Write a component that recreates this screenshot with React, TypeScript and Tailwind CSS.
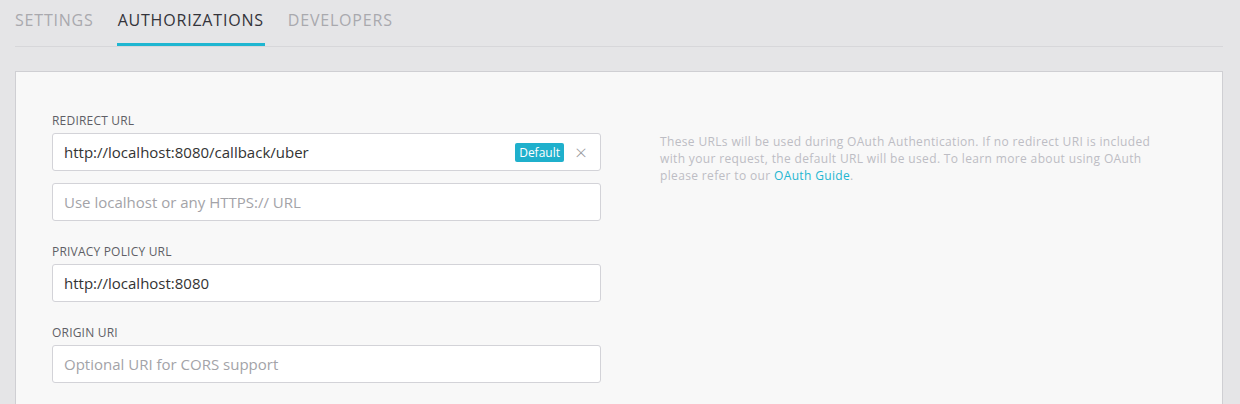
import React from 'react';

const TABS = [
  { label: 'SETTINGS', active: false },
  { label: 'AUTHORIZATIONS', active: true },
  { label: 'DEVELOPERS', active: false },
];

const Label: React.FC<{ text: string }> = ({ text }) => (
  <div className="text-[12px] leading-4 tracking-[0.2px] text-[#5f5f66] mb-1">{text}</div>
);

const Field: React.FC<{ value?: string; placeholder?: string; children?: React.ReactNode }> = ({
  value,
  placeholder,
  children,
}) => (
  <div className="h-[38px] bg-white border border-[#d3d3d8] rounded-[3px] flex items-center pl-[11px] pr-[13px]">
    {value ? (
      <span className="text-[15px] text-[#333] flex-1">{value}</span>
    ) : (
      <span className="text-[15px] text-[#a3a3a8] flex-1">{placeholder}</span>
    )}
    {children}
  </div>
);

const App: React.FC = () => {
  return (
    <div className="min-h-screen bg-[#e5e5e7] font-['Open_Sans',sans-serif] overflow-hidden">
      <div className="ml-[15px] mr-[17px]">
        <div className="flex gap-[23px] h-[47px] border-b border-[#d7d7da]">
          {TABS.map((tab) => (
            <div
              key={tab.label}
              className={
                tab.active
                  ? 'pt-[8px] border-b-[3px] border-[#1fb6d1] text-[#33333a] text-[16px] tracking-[0.8px] px-[1px] h-[46px]'
                  : 'pt-[8px] text-[#a9a9ae] text-[16px] tracking-[0.8px] h-[46px]'
              }
            >
              {tab.label}
            </div>
          ))}
        </div>

        <div className="mt-[24px] bg-[#f8f8f8] border border-[#cfcfd3] h-[400px] pl-[36px] pt-[41px] flex">
          <div className="w-[549px]">
            <Label text="REDIRECT URL" />
            <Field value="http://localhost:8080/callback/uber">
              <span className="bg-[#1fb0cc] text-white text-[12px] leading-[19px] px-[4px] rounded-[2px] mr-[11px]">
                Default
              </span>
              <span className="text-[#9a9aa0] text-[21px] leading-none font-light">×</span>
            </Field>
            <div className="mt-[12px]">
              <Field placeholder="Use localhost or any HTTPS:// URL" />
            </div>

            <div className="mt-[23px]">
              <Label text="PRIVACY POLICY URL" />
              <Field value="http://localhost:8080" />
            </div>

            <div className="mt-[23px]">
              <Label text="ORIGIN URI" />
              <Field placeholder="Optional URI for CORS support" />
            </div>
          </div>

          <div className="ml-[59px] mt-[20px] w-[500px] text-[12px] leading-[17px] tracking-[0.35px] text-[#bdbdc4]">
            These URLs will be used during OAuth Authentication. If no redirect URI is included with your request,
            the default URL will be used. To learn more about using OAuth please refer to our{' '}
            <a className="text-[#1fb6d1]">OAuth Guide</a>.
          </div>
        </div>
      </div>
    </div>
  );
};

export default App;
